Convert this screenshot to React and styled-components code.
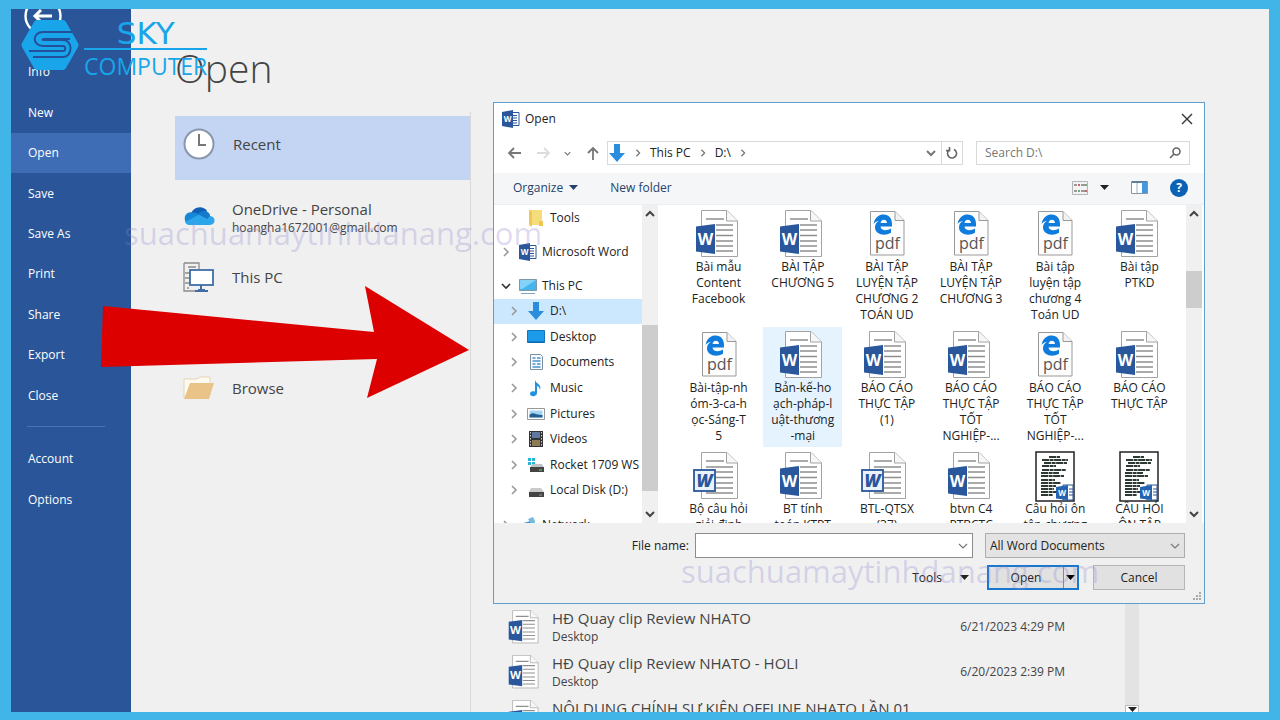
import React from 'react';
import styled, { createGlobalStyle, css } from 'styled-components';

const GlobalStyle = createGlobalStyle`
  * {
    box-sizing: border-box;
  }

  body {
    margin: 0;
    font-family: "Open Sans", "Noto Sans", sans-serif;
    font-size: 12px;
    line-height: 16px;
    color: #222;
  }

  button, input, select {
    font: inherit;
    color: inherit;
  }

  svg {
    display: block;
    flex: none;
  }
`;

/* ---------- icons ---------- */

const BackIcon = () => (
    <svg width="38" height="38" viewBox="0 0 38 38" fill="none" stroke="#fff" strokeWidth="2.4">
        <circle cx="19" cy="19" r="17.5" />
        <path d="M28 19H11M17 13l-6 6 6 6" strokeWidth="3" />
    </svg>
);

const ClockIcon = () => (
    <svg width="32" height="32" viewBox="0 0 32 32" fill="none">
        <circle cx="16" cy="16" r="14.5" fill="#fff" stroke="#8796ad" strokeWidth="2" />
        <path d="M16 6v11h7" stroke="#777" strokeWidth="2" />
    </svg>
);

const CloudIcon = () => (
    <svg width="32" height="32" viewBox="0 0 32 32">
        <path d="M8 14a9 9 0 0 1 16-3l-4 8H8z" fill="#0f5fb5" />
        <path d="M7 25a6.500 6.500 0 0 1-1-12.500c4-1 8 0 11 3l5 9.500z" fill="#1587d6" />
        <path d="M19 13c3-3 8-1 8 3 6 0 6 9 0 9H7c-2 0-4-1-5-3z" fill="#2ba6ea" />
        <path d="M15 14c4-5 11-3 12 2l-3 3z" fill="#1579cc" />
    </svg>
);

const ComputerIcon = () => (
    <svg width="32" height="32" viewBox="0 0 32 32" fill="none">
        <path d="M1 2h15v6M1 2v28h14M5 6h8M2 12h5M2 17h5M2 22h5M4 27h2" stroke="#8b8b8b" strokeWidth="1.300" />
        <rect x="7" y="9" width="23" height="15" fill="#fff" stroke="#3f6ea6" strokeWidth="1.800" />
        <path d="M18 24v5M12 30h13M15 29h7" stroke="#3f6ea6" strokeWidth="2" />
    </svg>
);

const FolderIcon = () => (
    <svg width="32" height="32" viewBox="0 0 32 32">
        <path d="M1 26V7h13l3-2h10v6" fill="#fffaf0" stroke="#e4d5b4" />
        <path d="M7 11h24l-5 16H1z" fill="#e9c388" />
    </svg>
);

const WordDocIcon = ({ size = 48 }) => (
    <svg width={size} height={size} viewBox="0 0 48 48">
        <path d="M6.500 .5H32L42.500 11v35.500h-36z" fill="#fff" stroke="#a3a3a3" />
        <path d="M31.500 .5V11h11" fill="#f7f7f7" stroke="#a3a3a3" />
        <path d="M11 9h18M21 15h17M21 20h17M21 25.500h17M21 31h17M21 36h17M21 41h17" stroke="#8f8f8f" strokeWidth="1.500" />
        <path d="M1 16.500L20 14v30L1 41.500z" fill="#2a569b" />
        <text x="10.500" y="34.500" textAnchor="middle" fontSize="16" fontWeight="700" fill="#fff">W</text>
    </svg>
);

const OldDocIcon = () => (
    <svg width="48" height="48" viewBox="0 0 48 48">
        <path d="M6.500 .5H32L42.500 11v35.500h-36z" fill="#fff" stroke="#a3a3a3" />
        <path d="M31.500 .5V11h11" fill="#f7f7f7" stroke="#a3a3a3" />
        <path d="M11 9h18M11 15h27M21 20h17M21 25.500h17M21 31h17M21 36h17M11 41h27" stroke="#8f8f8f" strokeWidth="1.500" />
        <rect x="-1" y="18" width="21" height="21" fill="#eaf2fc" stroke="#2a569b" strokeWidth="1.800" />
        <text x="9.500" y="34.500" textAnchor="middle" fontSize="17" fontStyle="italic" fontWeight="800" fill="#2a569b">W</text>
    </svg>
);

const PdfIcon = () => (
    <svg width="48" height="48" viewBox="0 0 48 48">
        <path d="M7.500 1.500H32l9 9v34.500H7.500z" fill="#fdfdfd" stroke="#999" />
        <path d="M32 1.500v9h9" fill="#f2f2f2" stroke="#999" />
        <path d="M10.500 14C12 7 16 4.500 20.500 4.500c5.500 0 8.500 4 8.500 9.500v2.500H17.500c.5 4.500 6.500 4.500 10.500 2v4.300C21 27 12 24 12 17.500c0-3 1.500-5.500 4-6.500-2.500 .2-4.500 1.500-5.500 3zM17.500 13h6.500c0-4.500-6-4.500-6.500 0z" fill="#0f7bdc" fillRule="evenodd" />
        <text x="24.500" y="39" textAnchor="middle" fontSize="16" fill="#555">pdf</text>
    </svg>
);

const PreviewIcon = () => (
    <svg width="48" height="50" viewBox="0 0 48 50">
        <rect x="5" y="0" width="38" height="49" fill="#fff" stroke="#222" strokeWidth="1.500" />
        <path d="M18 5h11M11 8h26M13 11h23M11 14h14M11 18h24M10 21h18M10 24h23M10 28h14M10 31h20M10 34h15M10 37h13M10 40h16M10 43h12" stroke="#2d3a33" strokeWidth="1.800" strokeDasharray="7 .6 4 .5" />
        <path d="M32 33h10v15H32z" fill="#fff" stroke="#2a569b" />
        <path d="M25 35l12-2v15l-12-1.500z" fill="#2563b0" />
        <path d="M38 37h4M38 40h4M38 43h4" stroke="#2a569b" />
        <text x="31" y="44" textAnchor="middle" fontSize="8" fontWeight="700" fill="#fff">W</text>
    </svg>
);

const WordAppIcon = () => (
    <svg width="18" height="18" viewBox="0 0 18 18">
        <path d="M9 2.500h8v13H9z" fill="#fff" stroke="#2a569b" />
        <path d="M11 5.500h4M11 8h4M11 10.500h4M11 13h4" stroke="#2a569b" />
        <path d="M0 2l11-2v18L0 16z" fill="#2a569b" />
        <text x="5.500" y="12" textAnchor="middle" fontSize="8" fontWeight="700" fill="#fff">W</text>
    </svg>
);

const DownArrowIcon = ({ size = 18 }) => (
    <svg width={size} height={size} viewBox="0 0 18 18">
        <path d="M6 0h6v9h5l-8 9-8-9h5z" fill="#2b8ddd" />
    </svg>
);

const Chevron = ({ dir = 'right', size = 10, color = '#777', weight = 1.6 }) => {
    const paths = {
        right: 'M3 1l4 4-4 4',
        down: 'M1 3l4 4 4-4',
        up: 'M1 7l4-4 4 4',
    };

    return (
        <svg width={size} height={size} viewBox="0 0 10 10" fill="none" stroke={color} strokeWidth={weight}>
            <path d={paths[dir]} />
        </svg>
    );
};

const Caret = ({ color = '#222' }) => (
    <svg width="9" height="5" viewBox="0 0 9 5"><path d="M0 0h9L4.500 5z" fill={color} /></svg>
);

const NavArrow = ({ dir, color = '#777' }) => {
    const paths = {
        left: 'M14 7H2M7 2L2 7l5 5',
        right: 'M1 7h12M8 2l5 5-5 5',
        up: 'M7 14V2M2 7l5-5 5 5',
    };

    return (
        <svg width="14" height="14" viewBox="0 0 14 14" fill="none" stroke={color} strokeWidth="1.800">
            <path d={paths[dir]} />
        </svg>
    );
};

const treeIcons = {
    tools: (
        <svg width="18" height="18" viewBox="0 0 18 18">
            <path d="M2 1h13v15H2z" fill="#f7dc7c" />
            <path d="M2 1l3 2v15l-3-2zM12 12h4v5h-4z" fill="#eec752" />
        </svg>
    ),
    word: <WordAppIcon />,
    pc: (
        <svg width="18" height="18" viewBox="0 0 18 18">
            <path d="M.5 2.500h17v11H.5z" fill="#45b5ec" stroke="#7d98a8" />
            <path d="M1 3h16L3 12H1z" fill="#83d2f7" />
            <path d="M2 16.500h14" stroke="#7fa6bd" />
        </svg>
    ),
    drive: <DownArrowIcon />,
    desktop: (
        <svg width="18" height="18" viewBox="0 0 18 18">
            <path d="M.5 2.500h17v12H.5z" fill="#1c9bea" stroke="#1475b8" />
            <path d="M1 14h16" stroke="#0f5f9c" />
        </svg>
    ),
    documents: (
        <svg width="18" height="18" viewBox="0 0 18 18">
            <path d="M3.500 1.500h10l2 2v13h-12z" fill="#f5fbff" stroke="#7b8f9e" />
            <path d="M5.500 5h3M10 5h3.500M5.500 8h8M5.500 11h3M10 11h3.500M5.500 14h8" stroke="#4b94c8" strokeWidth="1.400" />
        </svg>
    ),
    music: (
        <svg width="18" height="18" viewBox="0 0 18 18">
            <path d="M8 1c1 4 7 4 5 10-.5-3-2-4-3-4v7c0 4-7 4-7 1s3-3 5-2.500z" fill="#2391e0" />
        </svg>
    ),
    pictures: (
        <svg width="18" height="18" viewBox="0 0 18 18">
            <path d="M.5 3.500h17v11H.5z" fill="#fff" stroke="#999" />
            <path d="M2.500 5.500h13v7h-13z" fill="#a5d4f3" />
            <path d="M2.500 10c3-4 6 0 13 0v2.500h-13z" fill="#245f92" />
        </svg>
    ),
    videos: (
        <svg width="18" height="18" viewBox="0 0 18 18">
            <path d="M2 1h14v16H2z" fill="#333" />
            <path d="M5 2h8v6H5z" fill="#61789f" />
            <path d="M5 10h8v6H5z" fill="#8e7b55" />
            <path d="M3.500 2v14M14.500 2v14" stroke="#ccc" strokeDasharray="1.500 1.500" />
        </svg>
    ),
    system: (
        <svg width="18" height="18" viewBox="0 0 18 18">
            <path d="M1 2h3v3H1zM5 2h3v3H5zM1 6h3v3H1zM5 6h3v3H5z" fill="#28b4d6" />
            <path d="M5 8h10l2 4H3z" fill="#bfc3c5" />
            <path d="M3 11h14v5H3z" fill="#444" />
            <path d="M12 14h3" stroke="#5bdd74" />
        </svg>
    ),
    disk: (
        <svg width="18" height="18" viewBox="0 0 18 18">
            <path d="M4 7h10l3 4H2z" fill="#c8cacc" />
            <path d="M2 11h15v5H2z" fill="#444" />
            <path d="M12 14h3" stroke="#999" />
        </svg>
    ),
    network: (
        <svg width="18" height="18" viewBox="0 0 18 18">
            <path d="M1 8l14-4v10H1z" fill="#3d94cc" />
            <path d="M9 3l5-2 2 4v8" fill="#78b9df" />
        </svg>
    ),
};

const fileIcons = {
    word: <WordDocIcon />,
    old: <OldDocIcon />,
    pdf: <PdfIcon />,
    preview: <PreviewIcon />,
};

/* ---------- data ---------- */

const menuItems = ['Info', 'New', 'Open', 'Save', 'Save As', 'Print', 'Share', 'Export', 'Close'];

const pcItems = [
    { icon: 'drive', label: 'D:\\', active: true },
    { icon: 'desktop', label: 'Desktop' },
    { icon: 'documents', label: 'Documents' },
    { icon: 'music', label: 'Music' },
    { icon: 'pictures', label: 'Pictures' },
    { icon: 'videos', label: 'Videos' },
    { icon: 'system', label: 'Rocket 1709 WS' },
    { icon: 'disk', label: 'Local Disk (D:)' },
];

const files = [
    { icon: 'word', lines: ['Bài mẫu', 'Content', 'Facebook'] },
    { icon: 'word', lines: ['BÀI TẬP', 'CHƯƠNG 5'] },
    { icon: 'pdf', lines: ['BÀI TẬP', 'LUYỆN TẬP', 'CHƯƠNG 2', 'TOÁN UD'] },
    { icon: 'pdf', lines: ['BÀI TẬP', 'LUYỆN TẬP', 'CHƯƠNG 3'] },
    { icon: 'pdf', lines: ['Bài tập', 'luyện tập', 'chương 4', 'Toán UD'] },
    { icon: 'word', lines: ['Bài tập', 'PTKD'] },
    { icon: 'pdf', lines: ['Bài-tập-nh', 'óm-3-ca-h', 'ọc-Sáng-T', '5'] },
    { icon: 'word', lines: ['Bản-kế-ho', 'ạch-pháp-l', 'uật-thương', '-mại'], active: true },
    { icon: 'word', lines: ['BÁO CÁO', 'THỰC TẬP', '(1)'] },
    { icon: 'word', lines: ['BÁO CÁO', 'THỰC TẬP', 'TỐT', 'NGHIỆP-...'] },
    { icon: 'pdf', lines: ['BÁO CÁO', 'THỰC TẬP', 'TỐT', 'NGHIỆP-...'] },
    { icon: 'word', lines: ['BÁO CÁO', 'THỰC TẬP'] },
    { icon: 'old', lines: ['Bộ câu hỏi', 'giải định'] },
    { icon: 'word', lines: ['BT tính', 'toán KTPT'] },
    { icon: 'old', lines: ['BTL-QTSX', '(37)'] },
    { icon: 'word', lines: ['btvn C4', 'PTBCTC'] },
    { icon: 'preview', lines: ['Câu hỏi ôn', 'tập chương'] },
    { icon: 'preview', lines: ['CÂU HỎI', 'ÔN TẬP'] },
];

const recentFiles = [
    { name: 'HĐ Quay clip Review NHATO', place: 'Desktop', date: '6/21/2023 4:29 PM' },
    { name: 'HĐ Quay clip Review NHATO - HOLI', place: 'Desktop', date: '6/20/2023 2:39 PM' },
    { name: 'NỘI DUNG CHÍNH SỰ KIỆN OFFLINE NHATO LẦN 01', place: '', date: '' },
];

/* ---------- parts ---------- */

const Sidebar = () => (
    <SideNav>
        <BackButton aria-label="Back"><BackIcon /></BackButton>
        <MenuList>
            {menuItems.map((item) => (
                <MenuLink href="#" key={item} $active={item === 'Open'}>{item}</MenuLink>
            ))}
        </MenuList>
        <MenuDivider />
        <MenuList $short>
            <MenuLink href="#">Account</MenuLink>
            <MenuLink href="#">Options</MenuLink>
        </MenuList>
    </SideNav>
);

const TreeItem = ({ icon, label, active, level = 1, arrow = 'right' }) => (
    <TreeRow $active={active} $level={level}>
        <TreeArrow>
            {arrow && <Chevron dir={arrow} color={arrow === 'down' ? '#333' : '#999'} />}
        </TreeArrow>
        {treeIcons[icon]}
        <span>{label}</span>
    </TreeRow>
);

const ScrollBar = ({ before, thumb }) => (
    <Scroll>
        <Chevron dir="up" color="#444" weight={2} />
        <ScrollTrack>
            <ScrollThumb $before={before} $size={thumb} />
        </ScrollTrack>
        <Chevron dir="down" color="#444" weight={2} />
    </Scroll>
);

const OpenDialog = () => (
    <Dialog role="dialog" aria-label="Open">
        <TitleBar>
            <WordAppIcon />
            <span>Open</span>
            <IconButton aria-label="Close">
                <svg width="12" height="12" viewBox="0 0 12 12" stroke="#333" strokeWidth="1.400">
                    <path d="M1 1l10 10M11 1L1 11" />
                </svg>
            </IconButton>
        </TitleBar>

        <AddressRow>
            <NavButtons>
                <IconButton aria-label="Back"><NavArrow dir="left" /></IconButton>
                <IconButton aria-label="Forward"><NavArrow dir="right" color="#ddd" /></IconButton>
                <IconButton aria-label="Recent locations"><Chevron dir="down" size={7} /></IconButton>
                <IconButton aria-label="Up"><NavArrow dir="up" /></IconButton>
            </NavButtons>
            <AddressBar>
                <DownArrowIcon />
                <Chevron size={8} />
                <span>This PC</span>
                <Chevron size={8} />
                <span>D:\</span>
                <Chevron size={8} />
                <AddressEnd>
                    <IconButton aria-label="Previous locations"><Chevron dir="down" weight={2} /></IconButton>
                    <RefreshButton aria-label="Refresh">
                        <svg width="12" height="12" viewBox="0 0 12 12" fill="none" stroke="#666" strokeWidth="1.600">
                            <path d="M8 2.500A4.500 4.500 0 1 1 3 3.200M3.500 0v3.600H0" />
                        </svg>
                    </RefreshButton>
                </AddressEnd>
            </AddressBar>
            <SearchBox>
                <input type="text" placeholder="Search D:\" aria-label="Search" />
                <svg width="12" height="12" viewBox="0 0 12 12" fill="none" stroke="#666" strokeWidth="1.600">
                    <circle cx="7.500" cy="4.500" r="3.500" />
                    <path d="M5 7L1 11" />
                </svg>
            </SearchBox>
        </AddressRow>

        <Toolbar>
            <ToolButton>Organize <Caret color="#26426b" /></ToolButton>
            <ToolButton>New folder</ToolButton>
            <ToolbarEnd>
                <IconButton aria-label="Change view">
                    <svg width="16" height="14" viewBox="0 0 16 14">
                        <path d="M.5 .5h15v13H.5z" fill="#f3f3f3" stroke="#b5b5b5" />
                        <path d="M2 4h3M9 4h4M2 10h3M9 10h4" stroke="#999" strokeWidth="2" />
                        <path d="M6 4h2M13 10h2" stroke="#c66" strokeWidth="2" />
                        <path d="M6 10h2M13 4h2" stroke="#79a884" strokeWidth="2" />
                    </svg>
                </IconButton>
                <IconButton aria-label="More views"><Caret /></IconButton>
                <IconButton aria-label="Preview pane">
                    <svg width="17" height="13" viewBox="0 0 17 13">
                        <path d="M.5 .5h16v12H.5z" fill="#fff" stroke="#8296aa" />
                        <path d="M1 1h15" stroke="#5d7e9d" strokeWidth="2" />
                        <path d="M11 1h5v11h-5z" fill="#4398e0" />
                        <path d="M6 2v10" stroke="#9fb0c0" />
                    </svg>
                </IconButton>
                <HelpButton aria-label="Help">?</HelpButton>
            </ToolbarEnd>
        </Toolbar>

        <DialogBody>
            <Tree>
                <TreeItem icon="tools" label="Tools" arrow={null} />
                <TreeItem icon="word" label="Microsoft Word" level={0} />
                <TreeGroup>
                    <TreeItem icon="pc" label="This PC" level={0} arrow="down" />
                    {pcItems.map((item) => <TreeItem key={item.label} {...item} />)}
                </TreeGroup>
                <TreeItem icon="network" label="Network" level={0} />
            </Tree>
            <ScrollBar before={36} thumb={59} />
            <FileGrid>
                {files.map((file, index) => (
                    <FileCell key={index} $active={file.active}>
                        <FileIcon>{fileIcons[file.icon]}</FileIcon>
                        {file.lines.map((line) => <FileLine key={line}>{line}</FileLine>)}
                    </FileCell>
                ))}
            </FileGrid>
            <ScrollBar before={17} thumb={13} />
        </DialogBody>

        <Footer>
            <FooterRow>
                <label htmlFor="file-name">File name:</label>
                <NameField>
                    <input id="file-name" type="text" />
                    <Chevron dir="down" weight={1.2} />
                </NameField>
                <TypeField>
                    <select aria-label="File type">
                        <option>All Word Documents</option>
                    </select>
                    <Chevron dir="down" weight={1.2} />
                </TypeField>
            </FooterRow>
            <FooterRow>
                <ToolsButton>Tools <Caret /></ToolsButton>
                <SplitButton>
                    <button>Open</button>
                    <button aria-label="Open options"><Caret color="#000" /></button>
                </SplitButton>
                <CancelButton>Cancel</CancelButton>
            </FooterRow>
        </Footer>
        <Grip>
            <svg width="9" height="9" viewBox="0 0 9 9" fill="#aaa">
                <path d="M6 0h2v2H6zM6 3h2v2H6zM6 6h2v2H6zM3 3h2v2H3zM3 6h2v2H3zM0 6h2v2H0z" />
            </svg>
        </Grip>
    </Dialog>
);

const BrandLogo = () => (
    <Brand>
        <svg width="58" height="52" viewBox="0 0 58 52">
            <path d="M16 1h26q2 0 3 2l12 21q1 2 0 4L45 49q-1 2-3 2H16q-2 0-3-2L1 28q-1-2 0-4L13 3q1-2 3-2z" fill="#18a5ea" />
            <path d="M51 13H22c-11 0-11 14 0 14h20c3 0 3 5 0 5H8" fill="none" stroke="#24509a" strokeWidth="2" />
            <path d="M49 20H23c-2 0-2 1 0 1h19c10 0 10 17 0 17H12" fill="none" stroke="#24509a" strokeWidth="2" />
        </svg>
        <BrandText>
            <BrandName>SKY</BrandName>
            <span>COMPUTER</span>
        </BrandText>
    </Brand>
);

const App = () => (
    <>
        <GlobalStyle />
        <Frame>
            <Window>
                <Sidebar />
                <Main>
                    <Title>Open</Title>
                    <Columns>
                        <Places>
                            <Place $active>
                                <ClockIcon />
                                <span>Recent</span>
                            </Place>
                            <Place>
                                <CloudIcon />
                                <PlaceText>
                                    OneDrive - Personal
                                    <PlaceNote>hoangha1672001@gmail.com</PlaceNote>
                                </PlaceText>
                            </Place>
                            <Place>
                                <ComputerIcon />
                                <span>This PC</span>
                            </Place>
                            <Place $spaced>
                                <FolderIcon />
                                <span>Browse</span>
                            </Place>
                        </Places>
                        <RecentPane>
                            <RecentList>
                                {recentFiles.map((file) => (
                                    <RecentRow key={file.name}>
                                        <WordDocIcon size={34} />
                                        <RecentName>
                                            {file.name}
                                            <RecentPlace>{file.place}</RecentPlace>
                                        </RecentName>
                                        <span>{file.date}</span>
                                    </RecentRow>
                                ))}
                            </RecentList>
                            <PaneScroll>
                                <PaneScrollButton aria-label="Scroll down"><Caret /></PaneScrollButton>
                            </PaneScroll>
                        </RecentPane>
                    </Columns>
                </Main>
            </Window>

            <OpenDialog />
            <BigArrow width="370" height="114" viewBox="0 0 370 114">
                <path d="M3 20L274 46 265 0 369 64 267 112 277 73 1 81z" fill="#dc0000" />
            </BigArrow>
            <BrandLogo />
            <Watermark $left={124} $top={212}>suachuamaytinhdanang.com</Watermark>
            <Watermark $left={681} $top={550}>suachuamaytinhdanang.com</Watermark>
        </Frame>
    </>
);

export default App;

/* ---------- styles ---------- */

const Frame = styled.div`
  position: relative;
  display: flex;
  height: 100vh;
  padding: 9px 11px 8px;
  overflow: hidden;
  background: #41b4e8;
`;

const Window = styled.div`
  display: flex;
  flex: 1;
  min-width: 0;
  overflow: hidden;
  background: #f0f0f0;
`;

const SideNav = styled.nav`
  flex: none;
  width: 120px;
  background: #2a5699;
`;

const BackButton = styled.button`
  display: block;
  margin: -12px 0 17px 13px;
  padding: 0;
  border: 0;
  background: none;
`;

const MenuList = styled.div`
  display: grid;
  grid-auto-rows: 1fr;
  height: ${({ $short }) => ($short ? '81px' : '364px')};
`;

const MenuLink = styled.a`
  display: flex;
  align-items: center;
  padding-left: 17px;
  color: #fff;
  text-decoration: none;
  background: ${({ $active }) => ($active ? '#3e6db5' : 'transparent')};
`;

const MenuDivider = styled.div`
  height: 1px;
  margin: 10px 26px 12px 16px;
  background: #4a73b3;
`;

const Main = styled.main`
  display: flex;
  flex-direction: column;
  flex: 1;
  min-width: 0;
  padding-left: 44px;
`;

const Title = styled.h1`
  margin: 33px 0 18px;
  font-size: 39px;
  font-weight: 300;
  line-height: 52px;
  color: #444;
`;

const Columns = styled.div`
  display: flex;
  flex: 1;
  min-height: 0;
`;

const Places = styled.div`
  flex: none;
  width: 296px;
  padding-top: 4px;
  border-right: 1px solid #d9d9d9;
`;

const Place = styled.a`
  display: flex;
  align-items: center;
  gap: 17px;
  height: ${({ $active }) => ($active ? '64px' : '61px')};
  margin-top: ${({ $spaced }) => ($spaced ? '50px' : '0')};
  padding-left: 8px;
  font-size: 15px;
  line-height: 20px;
  color: #444;

  ${({ $active }) => $active && css`
    gap: 18px;
    margin-bottom: 5px;
    padding-bottom: 8px;
    background: #c3d5f2;
  `}
`;

const PlaceText = styled.div`
  padding-top: 4px;
`;

const PlaceNote = styled.div`
  font-size: 12px;
  line-height: 18px;
`;

const RecentPane = styled.div`
  display: flex;
  flex: 1;
  min-width: 0;
  padding: 492px 130px 0 32px;
`;

const RecentList = styled.div`
  flex: 1;
  min-width: 0;
`;

const RecentRow = styled.div`
  display: flex;
  align-items: center;
  gap: 10px;
  height: 45px;
  padding: 0 60px 0 5px;
  color: #444;
`;

const RecentName = styled.div`
  flex: 1;
  font-size: 15px;
  line-height: 18px;
  white-space: nowrap;
`;

const RecentPlace = styled.div`
  height: 18px;
  font-size: 12px;
  line-height: 20px;
`;

const PaneScroll = styled.div`
  display: flex;
  align-items: flex-end;
  width: 14px;
  background: #e3e3e3;
`;

const PaneScrollButton = styled.button`
  display: flex;
  justify-content: center;
  align-items: flex-end;
  width: 14px;
  height: 7px;
  padding: 0;
  overflow: hidden;
  border: 1px solid #bbb;
  border-bottom: 0;
  background: #fff;
`;

const Dialog = styled.section`
  position: absolute;
  top: 102px;
  left: 493px;
  display: flex;
  flex-direction: column;
  width: 712px;
  border: 1px solid #5f9fd0;
  background: #fff;
`;

const IconButton = styled.button`
  display: flex;
  align-items: center;
  padding: 0;
  border: 0;
  background: none;
`;

const TitleBar = styled.header`
  display: flex;
  align-items: center;
  gap: 5px;
  height: 32px;
  padding: 0 11px 0 8px;

  ${IconButton} {
    margin-left: auto;
  }
`;

const AddressRow = styled.div`
  display: flex;
  gap: 13px;
  height: 38px;
  padding: 6px 14px 8px 13px;
`;

const NavButtons = styled.div`
  display: flex;
  align-items: center;
  justify-content: space-between;
  width: 93px;
  margin-right: -6px;
`;

const AddressBar = styled.div`
  display: flex;
  flex: 1;
  align-items: center;
  gap: 8px;
  border: 1px solid #d9d9d9;
`;

const AddressEnd = styled.div`
  display: flex;
  align-self: stretch;
  gap: 5px;
  margin-left: auto;
`;

const RefreshButton = styled(IconButton)`
  justify-content: center;
  width: 21px;
  border-left: 1px solid #d9d9d9;
`;

const SearchBox = styled.div`
  display: flex;
  align-items: center;
  width: 214px;
  padding: 0 8px;
  border: 1px solid #d9d9d9;

  input {
    flex: 1;
    min-width: 0;
    padding: 0;
    border: 0;
    outline: 0;
  }

  input::placeholder {
    color: #777;
    opacity: 1;
  }
`;

const Toolbar = styled.div`
  display: flex;
  align-items: center;
  gap: 32px;
  height: 32px;
  padding: 0 16px 2px 19px;
  border-bottom: 1px solid #eee;
  background: #f5f6f7;
`;

const ToolButton = styled(IconButton)`
  gap: 6px;
  color: #26426b;
`;

const ToolbarEnd = styled.div`
  display: flex;
  align-items: center;
  margin-left: auto;

  ${IconButton} {
    margin-right: 12px;
  }

  ${IconButton} + ${IconButton} {
    margin-right: 22px;
  }
`;

const HelpButton = styled.button`
  width: 18px;
  height: 18px;
  padding: 0;
  border: 0;
  border-radius: 50%;
  font-weight: 700;
  color: #fff;
  background: #0b62b5;
`;

const DialogBody = styled.div`
  display: flex;
  height: 318px;
  padding-right: 2px;
  overflow: hidden;
`;

const Tree = styled.div`
  display: flex;
  flex-direction: column;
  flex: none;
  gap: 9px;
  width: 148px;
`;

const TreeGroup = styled.div`
  display: grid;
  flex: none;
  grid-auto-rows: 1fr;
  height: 230px;
`;

const TreeRow = styled.div`
  display: flex;
  flex: none;
  align-items: center;
  gap: 5px;
  min-height: 25px;
  padding-left: ${({ $level }) => ($level ? '15px' : '7px')};
  white-space: nowrap;
  background: ${({ $active }) => ($active ? '#cce8ff' : 'transparent')};
`;

const TreeArrow = styled.span`
  flex: none;
  width: 13px;
`;

const Scroll = styled.div`
  display: flex;
  flex-direction: column;
  flex: none;
  align-items: center;
  gap: 4px;
  width: 16px;
  padding: 4px 0;
  background: #f0f0f0;
`;

const ScrollTrack = styled.div`
  flex: 1;
  width: 100%;
`;

const ScrollThumb = styled.div`
  position: relative;
  top: ${({ $before }) => $before}%;
  height: ${({ $size }) => $size}%;
  background: #cdcdcd;
`;

const FileGrid = styled.div`
  display: grid;
  flex: 1;
  grid-template-columns: repeat(6, 1fr);
  grid-auto-rows: 120px;
  gap: 1px 5px;
  padding: 1px 7px 0 21px;
`;

const FileCell = styled.div`
  padding-top: 4px;
  text-align: center;
  white-space: nowrap;
  background: ${({ $active }) => ($active ? '#e5f3ff' : 'transparent')};
`;

const FileIcon = styled.div`
  display: flex;
  justify-content: center;
  height: 49px;

  svg {
    overflow: visible;
  }
`;

const FileLine = styled.div`
  line-height: 16px;
`;

const Footer = styled.footer`
  display: flex;
  flex-direction: column;
  gap: 7px;
  padding: 10px 19px 13px;
  background: #f0f0f0;
`;

const FooterRow = styled.div`
  display: flex;
  align-items: center;
  justify-content: flex-end;
  height: 25px;
`;

const NameField = styled.div`
  display: flex;
  align-items: center;
  width: 278px;
  height: 25px;
  margin: 0 12px 0 6px;
  padding-right: 4px;
  border: 1px solid #8c8c8c;
  background: #fff;

  input {
    flex: 1;
    min-width: 0;
    padding: 0 4px;
    border: 0;
    outline: 0;
  }
`;

const TypeField = styled.div`
  display: grid;
  grid-template-columns: 1fr 14px;
  align-items: center;
  width: 200px;
  height: 25px;
  border: 1px solid #adadad;
  background: #e3e3e3;

  select {
    grid-area: 1 / 1 / 2 / 3;
    padding: 0 4px;
    border: 0;
    appearance: none;
    background: none;
  }

  svg {
    grid-area: 1 / 2;
    pointer-events: none;
  }
`;

const ToolsButton = styled(IconButton)`
  gap: 18px;
  margin-right: 18px;
`;

const SplitButton = styled.div`
  display: flex;
  width: 92px;
  height: 25px;
  margin-right: 14px;
  border: 2px solid #1877cf;
  background: #e1e1e1;

  button {
    padding: 0;
    border: 0;
    background: none;
  }

  button:first-child {
    flex: 1;
  }

  button:last-child {
    padding: 0 2px;
    border-left: 1px solid #888;
  }
`;

const CancelButton = styled.button`
  width: 92px;
  height: 25px;
  padding: 0;
  border: 1px solid #b5b5b5;
  background: #e1e1e1;
`;

const Grip = styled.div`
  position: absolute;
  right: 2px;
  bottom: 2px;
`;

const BigArrow = styled.svg`
  position: absolute;
  top: 286px;
  left: 100px;
`;

const Brand = styled.div`
  position: absolute;
  top: 19px;
  left: 21px;
  display: flex;
  gap: 5px;
  color: #18a5ea;
`;

const BrandText = styled.div`
  display: flex;
  flex-direction: column;
  align-items: center;
  font-size: 23px;
  line-height: 32px;
`;

const BrandName = styled.div`
  width: 100%;
  border-bottom: 2px solid #18a5ea;
  font-family: "DejaVu Sans", sans-serif;
  font-size: 31px;
  line-height: 29px;
  text-align: center;
`;

const Watermark = styled.div`
  position: absolute;
  top: ${({ $top }) => $top}px;
  left: ${({ $left }) => $left}px;
  font-size: 31px;
  line-height: 42px;
  color: rgba(140, 130, 205, 0.28);
  pointer-events: none;
`;
